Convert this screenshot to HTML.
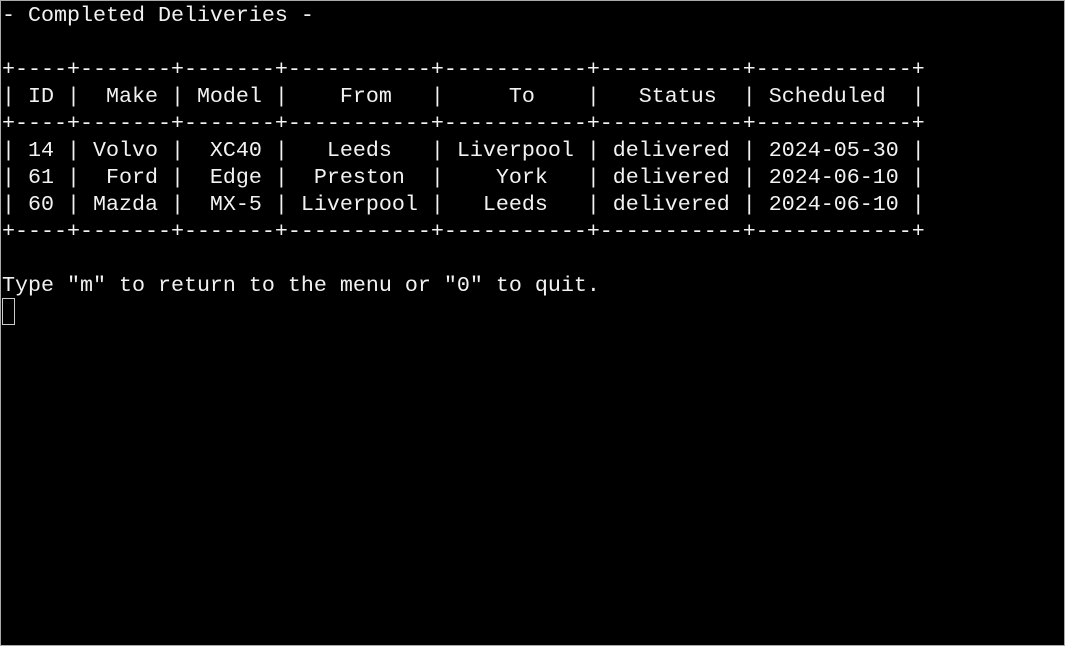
<!DOCTYPE html>
<html><head><meta charset="utf-8"><style>
html,body{margin:0;padding:0;background:#000;}
body{width:1063px;height:644px;border:1px solid #aaa;overflow:hidden;position:relative;}
pre{margin:0;position:absolute;left:1px;top:1px;font-family:"Liberation Mono","Courier New",monospace;font-size:21.67px;line-height:27px;color:#f2f2f2;}
.cur{position:absolute;left:1px;top:297px;width:11px;height:25px;border:1px solid #ccc;}
</style></head><body>
<pre>- Completed Deliveries -

+----+-------+-------+-----------+-----------+-----------+------------+
| ID |  Make | Model |    From   |     To    |   Status  | Scheduled  |
+----+-------+-------+-----------+-----------+-----------+------------+
| 14 | Volvo |  XC40 |   Leeds   | Liverpool | delivered | 2024-05-30 |
| 61 |  Ford |  Edge |  Preston  |    York   | delivered | 2024-06-10 |
| 60 | Mazda |  MX-5 | Liverpool |   Leeds   | delivered | 2024-06-10 |
+----+-------+-------+-----------+-----------+-----------+------------+

Type "m" to return to the menu or "0" to quit.
</pre>
<div class="cur"></div>
</body></html>
